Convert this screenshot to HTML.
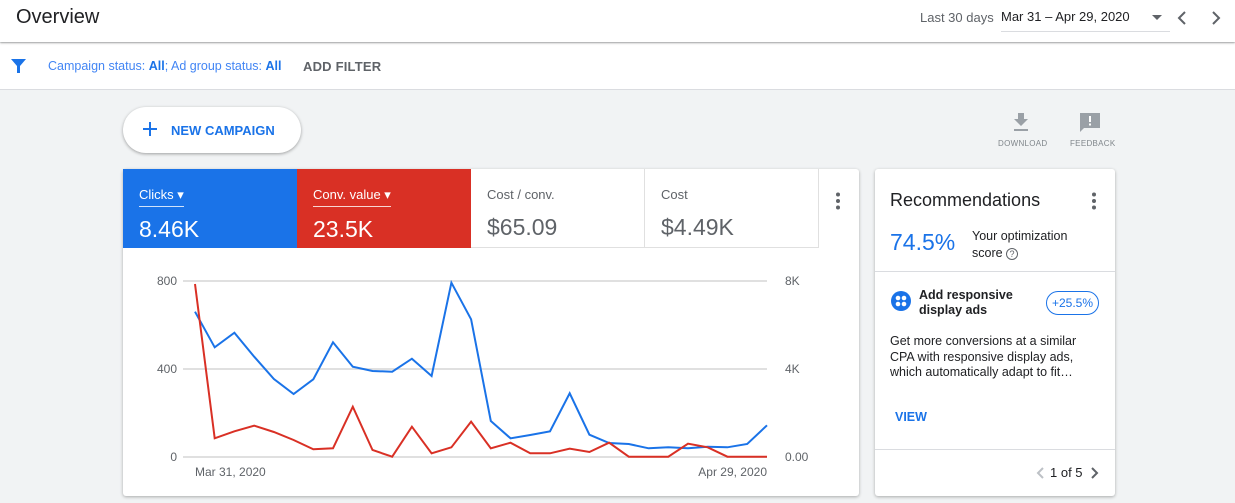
<!DOCTYPE html>
<html><head><meta charset="utf-8"><style>
*{box-sizing:border-box;margin:0;padding:0}
body{width:1235px;height:503px;overflow:hidden;background:#f1f3f4;font-family:"Liberation Sans",Arial,sans-serif;position:relative;color:#202124}
.abs{position:absolute}
#hdr{left:0;top:0;width:1235px;height:42px;background:#fff;box-shadow:0 1px 2px rgba(0,0,0,.35);z-index:2}
#flt{left:0;top:43px;width:1235px;height:47px;background:#fff;border-bottom:1px solid #dadce0}
.card{background:#fff;border-radius:3px;box-shadow:0 1px 3px rgba(0,0,0,.3)}
.tile{top:169px;height:79px;width:174px;padding:17px 0 0 16px}
.tl{font-size:13px;display:inline-block;padding-bottom:3px}
.tv{font-size:23px;margin-top:9px}
</style></head><body>
<div id="hdr" class="abs">
 <div class="abs" style="left:16px;top:6px;font-size:20px;color:#202124">Overview</div>
 <div class="abs" style="left:920px;top:10px;font-size:13px;color:#5f6368">Last 30 days</div>
 <div class="abs" style="left:1001px;top:9px;font-size:13px;color:#202124">Mar 31 – Apr 29, 2020</div>
 <div class="abs" style="left:1001px;top:31px;width:169px;height:1px;background:#dadce0"></div>
 <svg class="abs" style="left:1150px;top:12px" width="14" height="10"><path d="M2 3h10l-5 5z" fill="#5f6368"/></svg>
 <svg class="abs" style="left:1174px;top:9px" width="16" height="18"><path d="M11 3l-6 6 6 6" stroke="#5f6368" stroke-width="2" fill="none"/></svg>
 <svg class="abs" style="left:1208px;top:9px" width="16" height="18"><path d="M5 3l6 6-6 6" stroke="#5f6368" stroke-width="2" fill="none"/></svg>
</div>
<div id="flt" class="abs">
 <svg class="abs" style="left:10px;top:14px" width="18" height="18"><path d="M1 2h15l-6 7v7h-3v-7z" fill="#1a73e8"/></svg>
 <div class="abs" style="left:48px;top:16px;font-size:12.5px;color:#4285f4">Campaign status: <b style="color:#1a73e8">All</b>; Ad group status: <b style="color:#1a73e8">All</b></div>
 <div class="abs" style="left:303px;top:16px;font-size:13px;color:#5f6368;font-weight:bold;letter-spacing:.2px">ADD FILTER</div>
</div>
<div class="abs" style="left:123px;top:107px;width:178px;height:46px;background:#fff;border-radius:23px;box-shadow:0 1px 3px rgba(0,0,0,.35)">
 <svg class="abs" style="left:19px;top:14px" width="16" height="16"><path d="M8 1v14M1 8h14" stroke="#1a73e8" stroke-width="2"/></svg>
 <div class="abs" style="left:48px;top:16px;font-size:13px;font-weight:bold;color:#1a73e8">NEW CAMPAIGN</div>
</div>
<svg class="abs" style="left:1011px;top:112px" width="20" height="20"><path d="M7 1h6v6h4l-7 7-7-7h4zM3 17h14v2H3z" fill="#9aa0a6"/></svg>
<div class="abs" style="left:998px;top:139px;font-size:8px;color:#80868b;letter-spacing:.3px">DOWNLOAD</div>
<svg class="abs" style="left:1079px;top:112px" width="22" height="22"><path d="M1 1h20v15H5l-4 4z" fill="#9aa0a6"/><rect x="10" y="4" width="2" height="6" fill="#fff"/><rect x="10" y="11.5" width="2" height="2" fill="#fff"/></svg>
<div class="abs" style="left:1070px;top:139px;font-size:8px;color:#80868b;letter-spacing:.3px">FEEDBACK</div>

<div class="abs card" style="left:123px;top:169px;width:736px;height:327px"></div>
<div class="abs tile" style="left:123px;background:#1a73e8;color:#fff"><div class="tl" style="border-bottom:1px solid rgba(255,255,255,.8)">Clicks ▾</div><div class="tv">8.46K</div></div>
<div class="abs tile" style="left:297px;background:#d93025;color:#fff"><div class="tl" style="border-bottom:1px solid rgba(255,255,255,.8)">Conv. value ▾</div><div class="tv">23.5K</div></div>
<div class="abs tile" style="left:471px;color:#5f6368;border-right:1px solid #e0e0e0;border-bottom:1px solid #e0e0e0"><div class="tl">Cost / conv.</div><div class="tv">$65.09</div></div>
<div class="abs tile" style="left:645px;width:174px;color:#5f6368;border-right:1px solid #e0e0e0;border-bottom:1px solid #e0e0e0"><div class="tl">Cost</div><div class="tv">$4.49K</div></div>
<svg class="abs" style="left:834px;top:192px" width="8" height="18"><circle cx="4" cy="2.5" r="2" fill="#5f6368"/><circle cx="4" cy="9" r="2" fill="#5f6368"/><circle cx="4" cy="15.5" r="2" fill="#5f6368"/></svg>

<svg class="abs" style="left:0;top:0" width="1235" height="503">
<g stroke="#e0e0e0" stroke-width="2"><line x1="183" y1="281" x2="767" y2="281"/><line x1="183" y1="369" x2="767" y2="369"/><line x1="183" y1="457" x2="767" y2="457"/></g>
<g font-family="Liberation Sans,Arial" font-size="12" fill="#5f6368">
<text x="177" y="285" text-anchor="end">800</text><text x="177" y="373" text-anchor="end">400</text><text x="177" y="461" text-anchor="end">0</text>
<text x="785" y="285">8K</text><text x="785" y="373">4K</text><text x="785" y="461">0.00</text>
<text x="195" y="476">Mar 31, 2020</text><text x="767" y="476" text-anchor="end">Apr 29, 2020</text></g>
<polyline fill="none" stroke="#1a73e8" stroke-width="2" points="195,311.7 214.7,347.3 234.4,332.7 254.2,356.7 273.9,379 293.6,394 313.3,379.3 333,342.3 352.8,366.7 372.5,371 392.2,371.7 411.9,358.7 431.6,376 451.4,282.7 471.1,319.3 490.8,421 510.5,438.3 530.2,435 550,431.3 569.7,393.3 589.4,434.7 609.1,443 628.8,444 648.6,448.3 668.3,447.3 688,448.3 707.7,446.7 727.4,447.3 747.2,444 767,425.3"/>
<polyline fill="none" stroke="#d93025" stroke-width="2" points="195,284 214.7,438.3 234.4,431.3 254.2,425.7 273.9,432 293.6,440 313.3,449.3 333,448.3 352.8,406.7 372.5,450 392.2,456.7 411.9,426.7 431.6,453.3 451.4,447.3 471.1,421.7 490.8,448.3 510.5,442.7 530.2,453.3 550,453.3 569.7,448.7 589.4,452 609.1,442.7 628.8,456.7 648.6,456.7 668.3,456.7 688,443.7 707.7,447.3 727.4,456.7 747.2,456.7 767,456.7"/>
</svg>

<div class="abs card" style="left:875px;top:169px;width:240px;height:327px">
 <div class="abs" style="left:15px;top:21px;font-size:18px;color:#202124">Recommendations</div>
 <svg class="abs" style="left:215px;top:23px" width="8" height="18"><circle cx="4" cy="2.5" r="2" fill="#5f6368"/><circle cx="4" cy="9" r="2" fill="#5f6368"/><circle cx="4" cy="15.5" r="2" fill="#5f6368"/></svg>
 <div class="abs" style="left:15px;top:60px;font-size:23px;color:#1a73e8">74.5%</div>
 <div class="abs" style="left:97px;top:59px;font-size:12.5px;line-height:17px;color:#202124">Your optimization<br>score <span style="display:inline-block;width:12px;height:12px;border:1px solid #5f6368;border-radius:50%;font-size:9px;text-align:center;line-height:11px;color:#5f6368">?</span></div>
 <div class="abs" style="left:0;top:102px;width:240px;height:1px;background:#dadce0"></div>
 <svg class="abs" style="left:16px;top:122px" width="20" height="20"><circle cx="10" cy="10" r="10" fill="#1a73e8"/><g fill="#fff"><circle cx="7" cy="7" r="2.3"/><circle cx="13" cy="7" r="2.3"/><circle cx="7" cy="13" r="2.3"/><circle cx="13" cy="13" r="2.3"/></g></svg>
 <div class="abs" style="left:44px;top:119px;font-size:12.5px;font-weight:bold;line-height:15px">Add responsive<br>display ads</div>
 <div class="abs" style="left:171px;top:122px;width:53px;height:24px;border:1px solid #1a73e8;border-radius:12px;font-size:12px;color:#1a73e8;text-align:center;line-height:22px">+25.5%</div>
 <div class="abs" style="left:15px;top:165px;font-size:12.5px;line-height:15.5px;color:#202124">Get more conversions at a similar<br>CPA with responsive display ads,<br>which automatically adapt to fit…</div>
 <div class="abs" style="left:20px;top:241px;font-size:12.5px;font-weight:bold;color:#1a73e8">VIEW</div>
 <div class="abs" style="left:0;top:280px;width:240px;height:1px;background:#dadce0"></div>
 <svg class="abs" style="left:160px;top:297px" width="10" height="14"><path d="M8 2l-5 5 5 5" stroke="#bdc1c6" stroke-width="2" fill="none"/></svg>
 <div class="abs" style="left:175px;top:296px;font-size:13px;color:#202124">1 of 5</div>
 <svg class="abs" style="left:215px;top:297px" width="10" height="14"><path d="M2 2l5 5-5 5" stroke="#5f6368" stroke-width="2" fill="none"/></svg>
</div>
</body></html>
